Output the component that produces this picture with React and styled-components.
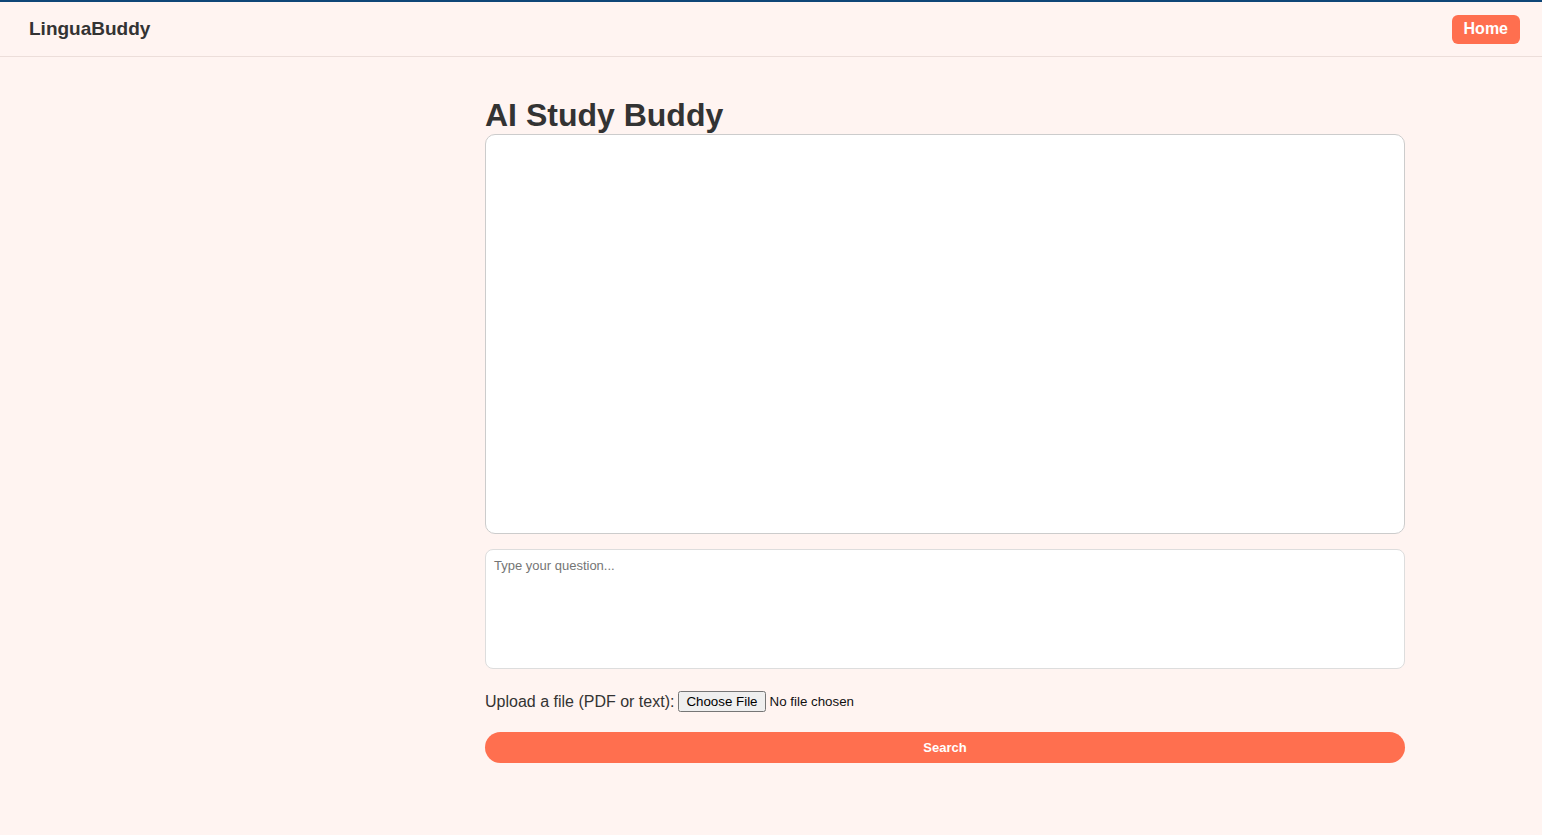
import React from "react";
import styled, { createGlobalStyle } from "styled-components";

const GlobalStyle = createGlobalStyle`
  html, body {
    margin: 0;
    padding: 0;
    background: #fff4f1;
    font-family: "Liberation Sans", Arial, sans-serif;
    color: #333;
  }
`;

const App = () => {
  return (
    <Page>
      <GlobalStyle />
      <Header>
        <Logo>LinguaBuddy</Logo>
        <HomeButton>Home</HomeButton>
      </Header>

      <Main>
        <Title>AI Study Buddy</Title>
        {/* Chat history */}
        <ChatBox />
        {/* Question input */}
        <QuestionInput placeholder="Type your question..." />
        <UploadRow>
          <UploadLabel htmlFor="file">Upload a file (PDF or text):</UploadLabel>
          <FileInput id="file" type="file" accept=".pdf,.txt" />
        </UploadRow>
        <SearchButton>Search</SearchButton>
      </Main>
    </Page>
  );
};

export default App;

// Styled Components
const Page = styled.div`
  min-height: 835px;
  border-top: 2px solid #0f4677;
  box-sizing: border-box;
`;

const Header = styled.header`
  height: 54px;
  display: flex;
  align-items: center;
  justify-content: space-between;
  padding: 0 22px 0 29px;
  border-bottom: 1px solid #ecdeda;
`;

const Logo = styled.div`
  font-size: 19px;
  font-weight: bold;
  color: #333;
`;

const HomeButton = styled.button`
  height: 29px;
  padding: 0 12px;
  border: none;
  border-radius: 6px;
  background: #ff6f4f;
  color: #fff;
  font-family: "Liberation Sans", Arial, sans-serif;
  font-size: 16px;
  font-weight: bold;
  cursor: pointer;
`;

const Main = styled.main`
  width: 920px;
  margin-left: 485px;
  padding-top: 40px;
  display: flex;
  flex-direction: column;
`;

const Title = styled.h1`
  margin: 0;
  font-size: 32px;
  line-height: 37px;
  font-weight: bold;
  color: #333;
`;

const ChatBox = styled.div`
  height: 400px;
  box-sizing: border-box;
  background: #fff;
  border: 1px solid #cccccc;
  border-radius: 10px;
  overflow-y: auto;
`;

const QuestionInput = styled.textarea`
  margin-top: 15px;
  height: 120px;
  box-sizing: border-box;
  padding: 8px;
  background: #fff;
  border: 1px solid #dddddd;
  border-radius: 8px;
  resize: none;
  font-family: "Liberation Sans", Arial, sans-serif;
  font-size: 13px;
  color: #333;
  outline: none;

  &::placeholder {
    color: #757575;
  }
`;

const UploadRow = styled.div`
  margin-top: 22px;
  display: flex;
  align-items: center;
  gap: 4px;
`;

const UploadLabel = styled.label`
  font-size: 16px;
  color: #333;
`;

const FileInput = styled.input`
  font-family: "Liberation Sans", Arial, sans-serif;
  font-size: 13.33px;
  color: #111;
`;

const SearchButton = styled.button`
  margin-top: 20px;
  height: 31px;
  border: none;
  border-radius: 16px;
  background: #ff6f4f;
  color: #fff;
  font-family: "Liberation Sans", Arial, sans-serif;
  font-size: 13px;
  font-weight: bold;
  cursor: pointer;
`;
